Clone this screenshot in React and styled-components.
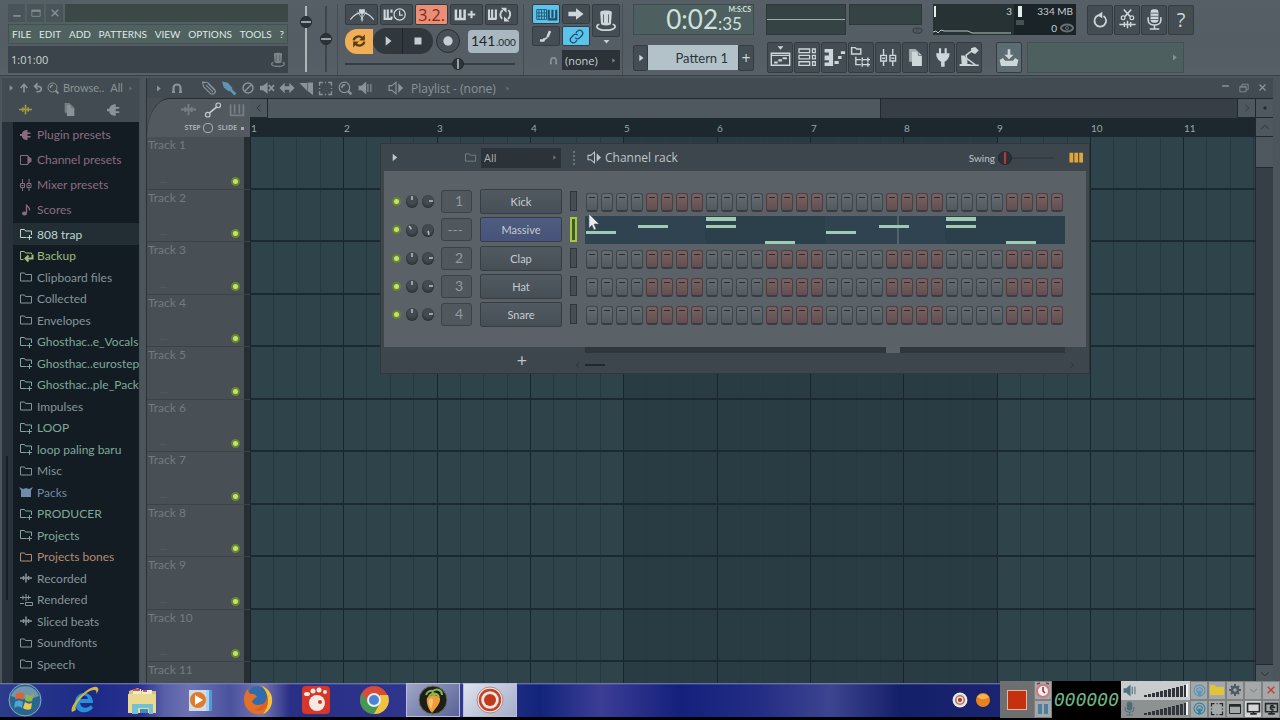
import React, { useState } from 'react'
import styled, { createGlobalStyle, css } from 'styled-components';

const narrow = 'Lato, "Open Sans", sans-serif';

const ICONS = {
  play: <path d="M8 4l10 8-10 8z" fill="currentColor" stroke="none" />,
  stop: <path d="M5 5h14v14H5z" fill="currentColor" stroke="none" />,
  dot: <circle cx="12" cy="12" r="7" fill="currentColor" stroke="none" />,
  down: <path d="M4 8h16l-8 9z" fill="currentColor" stroke="none" />,
  loop: <><path d="M3 11c1-7 10-9 15-4M21 13c-1 7-10 9-15 4" strokeWidth="4" /><path d="M22 1v10H12zM2 23V13h10z" fill="currentColor" stroke="none" /></>,
  metronome: <><path d="M-8 20C-2 12 5 8 12 8s14 4 20 12M12 6v17" strokeWidth="2" /><path d="M4 6L14 20M20 6L10 20" strokeWidth="1.4" /><path d="M7 2h10v5l-5 4-5-4z" fill="currentColor" stroke="none" /></>,
  waitKeys: <><path d="M-7 4v15H5M-2 4v14M4 4v5M4 15v4" strokeWidth="3.4" /><circle cx="17" cy="12" r="9" /><path d="M17 6v7h5" /></>,
  keysPlus: <><path d="M-5 4v15h14V4M2 4v14" strokeWidth="4" /><path d="M20 6v12M14 12h12" strokeWidth="3.4" /></>,
  keysLoop: <><path d="M-8 4v15H4M-3 4v14M3 4v15" strokeWidth="3.4" /><path d="M13 19a9 9 0 0 1 1-14M23 5a9 9 0 0 1-1 14" strokeWidth="3" /><path d="M11 1h9v8zM25 23h-9v-8z" fill="currentColor" stroke="none" /></>,
  grid: <><path d="M-6 3h18v18H-6zM-2 3v18M3 3v18M8 3v18M-6 9h18M-6 15h18" strokeWidth="1.6" /><path d="M16 3v18h14V3M23 3v15" strokeWidth="4" /></>,
  arrow: <path d="M-1 8h13V2l13 10-13 10v-6H-1z" fill="currentColor" stroke="none" />,
  glide: <><path d="M0 21h7l2-4M15 14l5-12" strokeWidth="5" /><path d="M9 18l6-3" strokeWidth="3" /></>,
  link: <path d="M10 14a5 5 0 0 0 7 0l4-4a5 5 0 0 0-7-7l-3 3M14 10a5 5 0 0 0-7 0l-4 4a5 5 0 0 0 7 7l3-3" />,
  hat: <><path d="M5 1c3-2 11-2 14 0l-1 15c-4 2-8 2-12 0z" fill="currentColor" stroke="none" /><path d="M4 16c-6 2-3 7 8 7s14-5 8-7" /><path d="M9 4v10M15 4v10" stroke="#4b555c" strokeWidth="1" /></>,
  magnet: <path d="M5 22v-10a7 7 0 0 1 14 0v10M2 20h6M16 20h6" strokeWidth="4.4" />,
  playlist: <><path d="M8 -4h8l-4 5z" fill="currentColor" stroke="none" /><path d="M-1 6h26v17H-1zM-1 9h26" /><path d="M3 19h5M9 16h5M15 13h6" strokeWidth="3" /></>,
  rack: <path d="M0 0h15v5H0zM0 9h15v5H0zM0 18h15v5H0zM19 0h4v5h-4zM19 9h4v5h-4zM19 18h4v5h-4z" strokeWidth="1.8" />,
  piano: <><path d="M-2 0h12v24H-2v-5h6v-3H-2v-7h6V5H-2z" fill="currentColor" stroke="none" /><path d="M12 19h6M17 12h5M21 5h6" strokeWidth="4" /></>,
  browser: <path d="M-2-2h5l2 2h6v7H-2zM4 11v11h7M4 15h7M13 12v6M13 19v6M13 15h11M13 22h11M21 12v6M21 19v6" strokeWidth="2" />,
  mixer: <path d="M5 0v9M5 17v7M18 0v9M18 17v7M1 9h8v8H1zM14 9h8v8h-8zM3 13h4M16 13h4" />,
  pages: <><path d="M3 0h9l4 4v14H3z" fill="currentColor" stroke="none" opacity=".7" /><path d="M7 4h9l5 5v15H7z" fill="currentColor" stroke="none" /><path d="M16 4v5h5" stroke="#4b555c" strokeWidth="1" /></>,
  plug: <path d="M7-1h3v7h5v-7h3v7h4c0 6-3 10-7 12v7h-5v-7C6 16 3 12 3 6h4z" fill="currentColor" stroke="none" />,
  lamp: <><path d="M16 2l-9 7 2 6" strokeWidth="2" /><path d="M14-1l6-2 5 5-5 5-5-2z" fill="currentColor" stroke="none" /><path d="M0 9h5l4 6v6h4v3H-2v-3h3z" fill="currentColor" stroke="none" /><path d="M9 14l12 9M12 23h13" /></>,
  save: <><path d="M10-1h4v8h5l-7 7-7-7h5z" fill="currentColor" stroke="none" /><path d="M-2 15l5-3 3 4h12l3-4 5 3-2 9H0z" fill="currentColor" stroke="none" /></>,
  undo: <><path d="M18 5a10 10 0 1 1-9-1" strokeWidth="3" /><path d="M16-2v11L7 4z" fill="currentColor" stroke="none" /></>,
  cut: <><path d="M6-4l10 11M18-4L8 7M-1 20h26M7 16v8M12 14v12M17 16v8" strokeWidth="2.4" /><circle cx="5" cy="9" r="3" /><circle cx="19" cy="9" r="3" /></>,
  mic: <><rect x="7" y="-1" width="10" height="17" rx="4" fill="currentColor" stroke="none" /><path d="M4 9v4c0 8 16 8 16 0V9M12 19v5M6 24h12" /><path d="M7 4h10M7 8h10M7 12h10" stroke="#4b555c" strokeWidth="1" /></>,
  up: <path d="M12 23V5M4 12l8-9 8 9" strokeWidth="4" />,
  back: <path d="M8 21c15 1 16-13 3-13H5M11 1L4 8l7 7" strokeWidth="4" />,
  search: <><circle cx="11" cy="11" r="9" /><path d="M7 12a4 4 0 0 1 5-5" strokeWidth="3" /><path d="M17 17l6 6" strokeWidth="4" /></>,
  wave: <path d="M0 12h24M7 8v8M12 3v18M17 8v8" strokeWidth="3" />,
  speaker: <><path d="M1 8h5l8-7v22l-8-7H1z" fill="currentColor" stroke="none" /><path d="M17 5v14M22 5v14" /></>,
  plugin: <path d="M0 10h4c0-5 5-8 11-8v5h6v3h-6v4h6v3h-6v5C9 22 4 19 4 14H0z" fill="currentColor" stroke="none" />,
  channel: <><path d="M1 3h15v18H1z" /><path d="M16 4l7 5v6l-7 5z" fill="currentColor" stroke="none" /></>,
  note: <><path d="M13 18V1c1 6 8 5 6 12" strokeWidth="2.6" /><ellipse cx="9" cy="19" rx="5" ry="4" fill="currentColor" stroke="none" /></>,
  folder: <path d="M1 20V4h8l2 3h12v13z" />,
  folderPlus: <path d="M13 19H1V3h8l2 3h12v8M19 14v10M14 19h10" />,
  folderBack: <><path d="M7 19H1V3h8l2 3h12v2" /><path d="M25 9v8H13M17 11l-6 6 6 6" strokeWidth="4" /></>,
  packs: <path d="M-2 2l8 4 6-2 6 2 8-4-4 7v13H2V9z" fill="currentColor" stroke="none" />,
  rendered: <path d="M0 7h22M6 3v8M12 0v14M17 3v8M0 19h8M11 17h14v6H11z" />,
  brush: <><path d="M0 1l10 2 8 9-6 6-9-7z" fill="currentColor" stroke="none" /><path d="M14 14l9 9" strokeWidth="5" /></>,
  pencil: <path d="M1 2l9 1 12 12c3 4-2 9-7 7L3 10zM7 7l12 12M11 5l11 11" />,
  ban: <><circle cx="12" cy="12" r="10" strokeWidth="3" /><path d="M5 19L19 5" strokeWidth="3" /></>,
  mute: <><path d="M0 8h5l8-6v20l-8-6H0z" fill="currentColor" stroke="none" /><path d="M15 7l9 10M24 7l-9 10" strokeWidth="3" /></>,
  slip: <path d="M-1 12l9-9v6h8V3l9 9-9 9v-6H8v6z" fill="currentColor" stroke="none" />,
  slice: <><path d="M-1 2h14v14z" fill="currentColor" stroke="none" /><path d="M15 2h8v20l-8-6z" fill="currentColor" /></>,
  select: <path d="M1 7V1h6M17 1h6v6M23 17v6h-6M7 23H1v-6M1 11v2M23 11v2M11 1h2M11 23h2" strokeWidth="2.5" />,
  monitor: <><path d="M0 8h5l7-6v20l-7-6H0z" /><path d="M16 4l8 8-8 8z" fill="currentColor" stroke="none" /></>,
  slide: <><circle cx="3" cy="20" r="4" /><circle cx="21" cy="4" r="4" /><path d="M6 17L18 7" strokeWidth="3" /></>,
  keys: <path d="M1 2v19h22V2M8 2v16M16 2v16" strokeWidth="3" />,
  steps: <path d="M-1 3h7v18h-7zM8 3h7v18H8zM17 3h7v18h-7z" fill="currentColor" stroke="none" />,
  left: <path d="M16 4l-9 8 9 8" />,
  right: <path d="M8 4l8 8-8 8" />,
  chevUp: <path d="M3 16l9-8 9 8" />,
  chevDown: <path d="M3 8l9 8 9-8" />,
  min: <path d="M3 8h18" strokeWidth="4" />,
  minLow: <path d="M3 19h18" strokeWidth="4" />,
  max: <><path d="M2 5h20v15H2z" /><path d="M2 7h20" strokeWidth="4" /></>,
  restore: <path d="M2 8h15v13H2zM7 8V3h15v13h-5M2 10h15" />,
  close: <path d="M4 4l16 16M20 4L4 20" strokeWidth="3.5" />,
  gear: <><circle cx="12" cy="12" r="6" strokeWidth="5" /><path d="M12 0v5M12 19v5M0 12h5M19 12h5M4 4l3 3M17 17l3 3M20 4l-3 3M4 20l3-3" strokeWidth="4" /></>,
  screen: <path d="M1 3h22v15H1zM12 18v4M6 22h12" strokeWidth="3" />,
  game: <><path d="M1 3h22v15H1zM12 18v4M6 22h12" strokeWidth="3" /><path d="M16 7a4 4 0 1 0 0 7M12 10h7" strokeWidth="3" /></>,
  windowed: <><path d="M1 3h22v18H1z" /><path d="M1 5h22" strokeWidth="5" /></>,
  radio: <><circle cx="12" cy="12" r="10" /><circle cx="12" cy="12" r="5" /><path d="M12 12v11" strokeWidth="5" /></>,
  eye: <><ellipse cx="12" cy="12" rx="12" ry="7" strokeWidth="4" /><circle cx="12" cy="12" r="3" /></>,
};

const Icon = ({ name, size = 14 }) => (
  <Svg width={size} height={size} viewBox="0 0 24 24" aria-hidden="true">{ICONS[name]}</Svg>
)

const BROWSER_TOP = [
  ['plugin', 'Plugin presets'], ['channel', 'Channel presets'], ['mixer', 'Mixer presets'], ['note', 'Scores'],
];

const FOLDERS = [
  { icon: 'folderPlus', name: '808 trap', color: '#b9d6d0', active: true },
  { icon: 'folderBack', name: 'Backup', color: '#9fb980' },
  { icon: 'folder', name: 'Clipboard files' },
  { icon: 'folder', name: 'Collected' },
  { icon: 'folder', name: 'Envelopes' },
  { icon: 'folderPlus', name: 'Ghosthac..e_Vocals', color: '#7fa89a' },
  { icon: 'folderPlus', name: 'Ghosthac..eurostep', color: '#7fa89a' },
  { icon: 'folderPlus', name: 'Ghosthac..ple_Pack', color: '#7fa89a' },
  { icon: 'folder', name: 'Impulses' },
  { icon: 'folderPlus', name: 'LOOP', color: '#7fa89a' },
  { icon: 'folderPlus', name: 'loop paling baru', color: '#7fa89a' },
  { icon: 'folder', name: 'Misc' },
  { icon: 'packs', name: 'Packs', color: '#6f8bab' },
  { icon: 'folderPlus', name: 'PRODUCER', color: '#7fa89a' },
  { icon: 'folderPlus', name: 'Projects', color: '#7fa89a' },
  { icon: 'folder', name: 'Projects bones', color: '#b38a70' },
  { icon: 'wave', name: 'Recorded' },
  { icon: 'rendered', name: 'Rendered' },
  { icon: 'wave', name: 'Sliced beats' },
  { icon: 'folder', name: 'Soundfonts' },
  { icon: 'folder', name: 'Speech' },
];

const CHANNELS = [
  { name: 'Kick', track: '1' },
  { name: 'Massive', track: '---', notes: true },
  { name: 'Clap', track: '2' },
  { name: 'Hat', track: '3' },
  { name: 'Snare', track: '4' },
];

// x, y, height inside the 480 x 28 mini piano roll
const NOTES = [
  [1, 15, 3], [53, 9, 3], [121, 1, 4], [121, 9, 3], [180, 25, 3],
  [241, 15, 3], [294, 9, 3], [361, 1, 4], [361, 9, 3], [421, 25, 3],
];

const BARS = Array.from({ length: 11 }, (_, i) => i + 1);
const STEPS = Array.from({ length: 32 }, (_, i) => i);

const TopBar = () => (
  <Toolbar>
    <MainPanel>
      <WindowRow>
        <WinButton aria-label="Minimize"><Icon name="minLow" size={10} /></WinButton>
        <WinButton aria-label="Maximize"><Icon name="max" size={10} /></WinButton>
        <WinButton aria-label="Close"><Icon name="close" size={10} /></WinButton>
        <WinTitle />
      </WindowRow>
      <Menu>
        {['FILE', 'EDIT', 'ADD', 'PATTERNS', 'VIEW', 'OPTIONS', 'TOOLS', '?'].map(m => (
          <MenuButton key={m}>{m}</MenuButton>
        ))}
      </Menu>
      <HintBar><span>1:01:00</span><Dim><Icon name="hat" /></Dim></HintBar>
    </MainPanel>
    <Faders>
      <Fader type="range" aria-label="Master volume" defaultValue="82" $track="#aeb6ba" />
      <Fader type="range" aria-label="Master pitch" defaultValue="50" $track="#3c454b" />
    </Faders>

    <Transport>
      <Row $gap={2}>
        <Tool $w={33} $h={21} aria-label="Metronome"><Icon name="metronome" size={14} /></Tool>
        <Tool $w={33} $h={21} aria-label="Wait for input"><Icon name="waitKeys" size={15} /></Tool>
        <Tool $w={33} $h={21} $tone="red">3.2.</Tool>
        <Tool $w={33} $h={21} aria-label="Step edit"><Icon name="keysPlus" size={15} /></Tool>
        <Tool $w={33} $h={21} aria-label="Loop record"><Icon name="keysLoop" size={15} /></Tool>
      </Row>
      <Row>
        <SongMode aria-label="Song mode"><Icon name="loop" size={14} /></SongMode>
        <PlayButton aria-label="Play"><Icon name="play" size={14} /></PlayButton>
        <StopButton aria-label="Stop"><Icon name="stop" size={12} /></StopButton>
        <RecButton aria-label="Record"><Icon name="dot" size={16} /></RecButton>
        <Tempo><TempoInput aria-label="Tempo" defaultValue="141" /><small>.000</small></Tempo>
      </Row>
      <Slider type="range" aria-label="Song position" defaultValue="68" />
    </Transport>

    <Snap>
      <SnapGrid>
        <Tool $w={28} $h={20} $tone="blue" aria-label="Typing keyboard"><Icon name="grid" size={13} /></Tool>
        <Tool $w={28} $h={20} aria-label="Auto scroll"><Icon name="arrow" size={14} /></Tool>
        <HatCell>
          <Tool $w={28} $h={33} aria-label="Hints"><Icon name="hat" size={20} /></Tool>
          <Icon name="down" size={9} />
        </HatCell>
        <Tool $w={28} $h={20} aria-label="Glide"><Icon name="glide" size={12} /></Tool>
        <Tool $w={28} $h={20} $tone="blue" aria-label="Link"><Icon name="link" size={15} /></Tool>
      </SnapGrid>
      <SnapRow>
        <Dim><Icon name="magnet" size={9} /></Dim>
        <SelectBox><DarkSelect aria-label="Snap"><option>(none)</option></DarkSelect><Icon name="play" size={7} /></SelectBox>
      </SnapRow>
    </Snap>

    <Stack>
      <Strip>
        <TimePanel>
          <TimeBig>0:02</TimeBig><TimeSide><sup>M:S:CS</sup><span>:35</span></TimeSide>
        </TimePanel>
        <Scope><ScopeLine /></Scope>
        <Spectrum><Meter /><Icon name="eye" size={9} /></Spectrum>
        <Cpu>
          <CpuGraph><span>3</span>
            <svg width="78" height="8" viewBox="0 0 78 8" aria-hidden="true"><path d="M0 5l3-1 2 2 3-3 3 1h24l4 2h40" fill="none" stroke="#b5c5c2" /></svg>
          </CpuGraph>
          <CpuInfo><span>334 MB</span><CpuLine>0<Dim><Icon name="eye" size={12} /></Dim></CpuLine></CpuInfo>
        </Cpu>
        <Row $gap={1}>
          <Tool $w={26} $h={30} aria-label="Undo"><Icon name="undo" size={14} /></Tool>
          <Tool $w={26} $h={30} aria-label="Edison"><Icon name="cut" size={15} /></Tool>
          <Tool $w={26} $h={30} aria-label="Record audio"><Icon name="mic" size={19} /></Tool>
          <Tool $w={26} $h={30} $big>?</Tool>
        </Row>
      </Strip>
      <Strip>
        <PatternPanel>
          <Tool $w={15} $h={26} aria-label="Previous pattern"><Icon name="play" size={10} /></Tool>
          <PatternSelect aria-label="Pattern"><option>Pattern 1</option></PatternSelect>
          <Tool $w={16} $h={26}>+</Tool>
        </PatternPanel>
        <Row $gap={1}>
          {['playlist', 'rack', 'piano', 'browser', 'mixer', 'pages', 'plug', 'lamp'].map(n => (
            <Tool key={n} $w={26} $h={31} aria-label={n}><Icon name={n} size={17} /></Tool>
          ))}
        </Row>
        <News>
          <Tool $w={26} $h={31} $tone="soft" aria-label="Downloads"><Icon name="save" size={16} /></Tool>
          <NewsPanel><Icon name="play" size={9} /></NewsPanel>
        </News>
      </Strip>
    </Stack>
  </Toolbar>
)

const Browser = () => (
  <Side>
    <SideHead>
      <Row $gap={4}>
        <Icon name="play" size={8} /><Icon name="up" size={10} /><Icon name="back" size={10} /><Icon name="search" size={12} />
        <span>Browse..</span><SideAll>All</SideAll><Dim><Icon name="play" size={7} /></Dim>
      </Row>
      <SideTabs>
        <IconButton aria-label="All" $color="#a39a3e"><Icon name="wave" size={13} /></IconButton>
        <IconButton aria-label="Files"><Icon name="pages" size={13} /></IconButton>
        <IconButton aria-label="Plugins"><Icon name="plugin" /></IconButton>
      </SideTabs>
    </SideHead>
    <SideBody>
      <SideScroll><SideThumb /></SideScroll>
      <Lists>
        <PresetList>
          {BROWSER_TOP.map(([icon, name]) => <Preset key={name}><Icon name={icon} size={12} />{name}</Preset>)}
        </PresetList>
        <FolderList>
          {FOLDERS.map(f => (
            <Folder key={f.name} $color={f.color} $active={f.active}><Icon name={f.icon} size={12} />{f.name}</Folder>
          ))}
        </FolderList>
      </Lists>
    </SideBody>
  </Side>
)

const Knob = ({ angle, label }) => (
  <KnobLabel>
    <svg width="14" height="16" viewBox="0 0 14 16" aria-hidden="true">
      <circle cx="7" cy="9" r="6" fill="#2b3136" />
      <circle cx="7" cy="8" r="6" fill="#373f45" />
      <circle cx="7" cy="7" r="5" fill="#434b51" />
      <path d="M7 3v4" stroke="#b4bcc0" strokeWidth="1.6" transform={`rotate(${angle} 7 8)`} />
    </svg>
    <input type="range" aria-label={label} />
  </KnobLabel>
)

const ChannelRow = ({ channel }) => {
  const [on, setOn] = useState({});

  return (
    <ChannelLine $tall={channel.notes}>
      <Led type="checkbox" defaultChecked aria-label={`${channel.name} on`} />
      <Knob angle={channel.notes ? -35 : 0} label={`${channel.name} pan`} />
      <Knob angle={channel.notes ? 170 : 90} label={`${channel.name} volume`} />
      <TrackNo>{channel.track}</TrackNo>
      <ChannelButton $selected={channel.notes}>{channel.name}</ChannelButton>
      <Selector $selected={channel.notes} aria-label={`Select ${channel.name}`} />
      {channel.notes
        ? <Roll viewBox="0 0 480 28" width="480" height="28">
            <path d="M0 0h480v28H0z" fill="#2f4450" />
            <path d="M120 0h120v28H120zM360 0h120v28H360z" fill="#2c404b" />
            <path d="M313 0v28" stroke="#6c8580" />
            {NOTES.map(([x, y, h]) => <rect key={`${x}-${y}`} x={x} y={y} width="30" height={h} fill="#9ecbb2" />)}
          </Roll>
        : <StepRow>
            {STEPS.map(i => (
              <Step key={i} $red={Math.floor(i / 4) % 2 === 1} aria-label={`Step ${i + 1}`} aria-pressed={!!on[i]}
                onClick={() => setOn({ ...on, [i]: !on[i] })} />
            ))}
          </StepRow>}
    </ChannelLine>
  )
}

const ChannelRack = () => (
  <Rack>
    <RackTitle>
      <Icon name="play" size={11} />
      <Filter>
        <Dim><Icon name="folder" size={11} /></Dim>
        <SelectBox $wide><DarkSelect aria-label="Channel filter"><option>All</option></DarkSelect><Icon name="play" size={7} /></SelectBox>
      </Filter>
      <Grip />
      <Icon name="monitor" size={13} />
      <RackName>Channel rack</RackName>
      <SwingLabel>Swing <Swing type="range" defaultValue="0" /></SwingLabel>
      <IconButton $color="#e0a63a" aria-label="Step graph"><Icon name="steps" size={13} /></IconButton>
    </RackTitle>
    <RackBody>
      {CHANNELS.map(c => <ChannelRow key={c.name} channel={c} />)}
    </RackBody>
    <RackFoot>
      <AddChannel aria-label="Add channel">+</AddChannel>
      <FootBars>
        <FootTrack><FootThumb /></FootTrack>
        <FootScroll><Icon name="left" size={8} /><FootHandle /><Icon name="right" size={8} /></FootScroll>
      </FootBars>
    </RackFoot>
    <Pointer width="12" height="18" viewBox="0 0 12 18" aria-hidden="true">
      <path d="M1 1v14l3-3 2 5 2-1-2-5h5z" fill="#e8eef0" stroke="#555e66" strokeWidth=".6" />
    </Pointer>
  </Rack>
)

const Playlist = () => (
  <Window>
    <PlayTitle>
      <Icon name="play" size={9} />
      <Icon name="magnet" size={12} />
      <ToolSet>
        <Icon name="pencil" /><BlueIcon><Icon name="brush" /></BlueIcon><Icon name="ban" size={12} /><Icon name="mute" /><Icon name="slip" />
        <Icon name="slice" size={13} /><Icon name="select" size={13} /><Icon name="search" /><Icon name="speaker" />
      </ToolSet>
      <Icon name="monitor" />
      <PlayName>Playlist - (none)</PlayName>
      <Dim><Icon name="play" size={7} /></Dim>
      <WinSet><Icon name="min" size={9} /><Icon name="restore" size={10} /><Icon name="close" size={9} /></WinSet>
    </PlayTitle>
    <PlayBody>
      <TrackColumn>
        <TrackHead>
          <Row $gap={10}><Dim><Icon name="wave" size={15} /></Dim><BrightIcon><Icon name="slide" /></BrightIcon><Dim><Icon name="keys" /></Dim></Row>
          <StepSlide>STEP<i />SLIDE<b /></StepSlide>
        </TrackHead>
        {BARS.map(n => (
          <Track key={n}>
            <TrackName><span>Track {n}</span><TrackDots>...</TrackDots></TrackName>
            <Led type="checkbox" defaultChecked aria-label={`Track ${n} on`} />
          </Track>
        ))}
      </TrackColumn>
      <Arrange>
        <HScroll>
          <ScrollButton aria-label="Scroll left"><Icon name="left" size={10} /></ScrollButton>
          <HThumb />
          <HRest />
          <ScrollButton aria-label="Scroll right"><Icon name="right" size={10} /></ScrollButton>
        </HScroll>
        <Ruler>{BARS.map(n => <Bar key={n}>{n}</Bar>)}</Ruler>
        <Lanes>{BARS.map(n => <Lane key={n} />)}</Lanes>
      </Arrange>
      <VScroll>
        <ScrollButton aria-label="Zoom"><Icon name="dot" size={6} /></ScrollButton>
        <ScrollButton aria-label="Scroll up"><Icon name="chevUp" size={10} /></ScrollButton>
        <VThumb />
        <VRest />
        <ScrollButton aria-label="Scroll down"><Icon name="chevDown" size={10} /></ScrollButton>
      </VScroll>
    </PlayBody>
    <ChannelRack />
  </Window>
)

const APPS = {
  explorer: <><path d="M2 6l9-3 3 3h15v22H2z" fill="#d8c57c" /><path d="M6 4h8v6H6zM15 5h10v6H15z" fill="#f2ecd6" /><path d="M6 5h7M16 6h4" stroke="#cb5644" strokeWidth="2" /><path d="M1 9h28v19H1z" fill="#ead98e" /><path d="M5 19h21v10h-4v-6H11v6H5z" fill="#6fc1d8" /><path d="M13 24h8v4h-8z" fill="#3f8dbd" /></>,
  ie: <><path d="M24 18H11c1 6 8 6 11 2l2 3c-7 8-19 4-18-6C7 5 24 5 24 18zM11 14h8c-1-5-7-4-8 0z" fill="#2a8fdb" /><path d="M3 27C-1 20 24-4 29 3c1 2 0 4-2 6 1-3 0-4-2-4C17 5 4 21 7 25z" fill="#d4b83e" /></>,
  player: <><path d="M12 5h15v21H12z" fill="#4f9bd8" /><path d="M9 5h15v21H9z" fill="#a9d3ee" /><path d="M4 5h17v21H4z" fill="#d3dde4" /><circle cx="13" cy="15" r="8" fill="#e07a2c" /><path d="M10 10l8 5-8 5z" fill="#fff" /></>,
  firefox: <><circle cx="15" cy="15" r="14" fill="#dd6022" /><circle cx="14" cy="11" r="10" fill="#2f6cae" /><path d="M1 14c0-5 2-8 4-10 0 3 1 4 3 5 3-1 5 1 6 3-3 1-3 3-5 4 1 4 6 5 10 3-1 3-5 6-9 5 4 3 11 2 14-3 2-4 3-8 1-14 6 7 4 16-1 19-9 7-22 2-23-12z" fill="#e2702a" /><path d="M19 1c7 3 11 9 10 16-1 6-4 10-9 12 7-8 7-19-1-28z" fill="#f0c53d" /></>,
  gom: <><rect x="1" y="1" width="28" height="28" rx="4" fill="#d9362b" /><circle cx="16" cy="18" r="8" fill="#f4e9e3" /><circle cx="19" cy="17" r="2" fill="#d9362b" /><ellipse cx="6" cy="9" rx="3" ry="2" fill="#f4e9e3" /><circle cx="12" cy="6" r="2.5" fill="#f4e9e3" /><circle cx="18" cy="5" r="2.5" fill="#f4e9e3" /><circle cx="24" cy="7" r="2" fill="#f4e9e3" /></>,
  chrome: <><circle cx="15" cy="15" r="14" fill="#d84a3a" /><path d="M3 8a14 14 0 0 0 12 21l6-11-6 3-6-3z" fill="#3f9b52" /><path d="M29 10a14 14 0 0 1-14 19l6-11V10z" fill="#efc33d" /><circle cx="15" cy="15" r="7" fill="#eee" /><circle cx="15" cy="15" r="5" fill="#4a84d8" /></>,
  fl: <><circle cx="15" cy="15" r="14" fill="#1b1e1a" stroke="#6a7058" /><path d="M9 13c3-4 10-4 13 0 1 5-5 11-8 15-4-4-6-11-5-15z" fill="#f09c38" /><path d="M11 15c1-2 4-2 4 0 0 4-1 7-2 9-1-2-3-6-2-9z" fill="#f8c673" /><path d="M8 10c1-3 4-5 7-4 4-3 9-1 9 4M11 12c1-4 8-5 10 0M15 6c-1 2 0 4 2 5" fill="none" stroke="#8db549" strokeWidth="2" /></>,
  cam: <><circle cx="15" cy="15" r="13" fill="#f1e7e1" stroke="#a98c86" /><circle cx="15" cy="15" r="10" fill="none" stroke="#c44127" strokeWidth="2.5" /><circle cx="15" cy="15" r="6" fill="#c23a1e" /></>,
  target: <><circle cx="15" cy="15" r="14" fill="#f1e7e1" /><circle cx="15" cy="15" r="8" fill="none" stroke="#9a7a72" strokeWidth="3" /><circle cx="15" cy="15" r="4" fill="#c23a1e" /></>,
};

const AppIcon = ({ name, size = 30 }) => <svg width={size} height={size} viewBox="0 0 30 30" aria-hidden="true">{APPS[name]}</svg>

const Levels = () => (
  <svg width="44" height="13" viewBox="0 0 44 13" aria-hidden="true">
    {Array.from({ length: 11 }, (_, i) => <rect key={i} x={i * 4} y={11 - i} width="3" height={2 + i} fill="#32363a" />)}
    <path d="M43 0v13" stroke="#f4f4f4" strokeWidth="2" />
  </svg>
)

const Taskbar = () => (
  <Tasks>
    <Start aria-label="Start">
      <svg width="34" height="34" viewBox="0 0 34 34" aria-hidden="true">
        <circle cx="17" cy="17" r="16" fill="#28668f" stroke="#8ba9bd" />
        <path d="M3 13c4-13 24-13 28 0-9 4-19 4-28 0z" fill="#91abb9" opacity=".7" />
        <path d="M8 11c3-2 5-2 8 0l-1 6c-3-2-5-2-8 0z" fill="#dd6236" />
        <path d="M18 11c3 2 5 2 8 0l-2 7c-3 1-4 1-7-1z" fill="#8db846" />
        <path d="M7 19c3-2 5-2 8 0l-1 6c-3-2-5-2-8 0z" fill="#4ba6d6" />
        <path d="M17 19c3 2 4 2 7 1l-1 6c-3 1-5 1-8-1z" fill="#efc94b" />
      </svg>
    </Start>
    {['ie', 'explorer', 'player', 'firefox', 'gom', 'chrome'].map(n => <Pinned key={n} aria-label={n}><AppIcon name={n} /></Pinned>)}
    <Running aria-label="FL Studio"><AppIcon name="fl" /></Running>
    <Running aria-label="Recorder" $bright><AppIcon name="cam" /></Running>
    <Tray>
      <AppIcon name="target" size={16} />
      <svg width="16" height="16" viewBox="0 0 16 16" aria-hidden="true"><circle cx="8" cy="8" r="7" fill="#e8821e" /><path d="M2 5c3-4 9-4 12 0-4 3-8 3-12 0z" fill="#f6b552" /></svg>
    </Tray>
    <Recorder>
      <StopBlock aria-label="Stop recording"><i /></StopBlock>
      <RecCol>
        <RecCell $color="#c05a5a" aria-label="Schedule">
          <svg width="16" height="16" viewBox="0 0 16 16" aria-hidden="true"><circle cx="8" cy="9" r="6" fill="#eee" stroke="#c77b7b" strokeWidth="2" /><path d="M8 5v4l2 2M2 2l3-1M14 2l-3-1" fill="none" stroke="#933" strokeWidth="1.6" /></svg>
        </RecCell>
        <RecCell $color="#4c7f9f" aria-label="Pause"><svg width="12" height="12" viewBox="0 0 12 12" aria-hidden="true"><path d="M1 1h4v10H1zM7 1h4v10H7z" fill="currentColor" /></svg></RecCell>
      </RecCol>
      <Clock>000000</Clock>
      <RecCol>
        <LevelRow $lit><Icon name="speaker" size={13} /><Levels /></LevelRow>
        <LevelRow><Icon name="mic" size={13} /><Levels /></LevelRow>
      </RecCol>
      <RecGrid>
        <RecCell $color="#5795bb" aria-label="Stream"><Icon name="radio" size={13} /></RecCell>
        <RecCell $color="#e2c437" aria-label="Open folder"><svg width="14" height="12" viewBox="0 0 14 12" aria-hidden="true"><path d="M0 11V1h5l1 2h8v8z" fill="currentColor" /></svg></RecCell>
        <RecCell $color="#4d5a63" aria-label="Settings"><Icon name="gear" size={12} /></RecCell>
        <RecCell $color="#5c7080" aria-label="Collapse"><Icon name="chevDown" size={9} /></RecCell>
        <RecCell $color="#c0442f" aria-label="Close recorder"><Icon name="close" size={10} /></RecCell>
        <RecCell $color="#2f83a5" aria-label="Webcam"><Icon name="radio" size={13} /></RecCell>
        <RecCell aria-label="Region"><Icon name="select" size={12} /></RecCell>
        <RecCell aria-label="Window"><Icon name="windowed" size={12} /></RecCell>
        <RecCell $lit aria-label="Full screen"><Icon name="screen" size={13} /></RecCell>
        <RecCell aria-label="Game"><Icon name="game" size={13} /></RecCell>
      </RecGrid>
    </Recorder>
  </Tasks>
)

const App = () => (
  <Page>
    <GlobalStyle />
    <TopBar />
    <Main>
      <Browser />
      <Playlist />
    </Main>
    <Taskbar />
  </Page>
)

export default App;


const GlobalStyle = createGlobalStyle`
  * { box-sizing: border-box; }
  body { margin: 0; background: #000; font-family: "Open Sans", "Noto Sans", sans-serif; }
  button, input, select { font: inherit; color: inherit; margin: 0; padding: 0; border: 0; background: none; }
  ul { list-style: none; margin: 0; padding: 0; }
`;

const Page = styled.div`
  display: flex;
  flex-direction: column;
  height: 100vh;
  padding-bottom: 3px;
  background: #000;
  color: #9aa4a9;
  font-size: 12px;
`;

const Svg = styled.svg`
  flex: none;
  display: block;
  overflow: visible;
  fill: none;
  stroke: currentColor;
  stroke-width: 2;
`;

const Row = styled.div`
  display: flex;
  align-items: center;
  gap: ${p => p.$gap || 0}px;
`;

const Dim = styled.span`
  display: inline-flex;
  opacity: 0.45;
`;

const IconButton = styled.button`
  display: inline-flex;
  color: ${p => p.$color || '#8a9498'};
`;

/* top toolbar */

const Toolbar = styled.header`
  display: flex;
  flex: none;
  height: 76px;
  padding: 4px 0 0 8px;
  background: linear-gradient(#565f66, #555d64 60%, #586067);
  border-bottom: 1px solid #3a4248;
  color: #c5ced1;
`;

const MainPanel = styled.div`
  display: flex;
  flex-direction: column;
  gap: 2px;
  width: 280px;
`;

const WindowRow = styled.div`
  display: flex;
  gap: 2px;
  height: 18px;
`;

const WinButton = styled.button`
  width: 17px;
  display: flex;
  align-items: center;
  justify-content: center;
  background: #48545a;
  color: #87918f;
`;

const WinTitle = styled.div`
  flex: 1;
  background: #3b4845;
`;

const Menu = styled.nav`
  display: flex;
  align-items: center;
  justify-content: space-between;
  height: 20px;
  padding: 0 3px;
  background: #50625f;
  border: 1px solid #44524f;
`;

const MenuButton = styled.button`
  font-family: ${narrow};
  font-size: 10px;
  color: #dde8e5;
`;

const HintBar = styled.div`
  display: flex;
  align-items: center;
  justify-content: space-between;
  height: 27px;
  padding: 0 3px;
  background: #3b444a;
  color: #ccd4d6;
  font-size: 11px;
`;

const Faders = styled.div`
  display: flex;
  justify-content: space-between;
  width: 47px;
  padding: 2px 2px 2px 11px;
`;

const sliderThumb = css`
  appearance: none;
  width: 12px;
  height: 12px;
  border-radius: 6px;
  border: 1px solid #22282c;
  background: linear-gradient(90deg, #2d3439 40%, #9aa3a8 40%, #9aa3a8 60%, #2d3439 60%);
`;

const Fader = styled.input`
  appearance: none;
  writing-mode: vertical-lr;
  direction: rtl;
  width: 14px;
  height: 66px;
  background: linear-gradient(90deg, transparent 6px, ${p => p.$track} 6px, ${p => p.$track} 8px, transparent 8px);
  &::-webkit-slider-thumb {
    ${sliderThumb}
    background: linear-gradient(#2d3439 40%, #9aa3a8 40%, #9aa3a8 60%, #2d3439 60%);
  }
`;

const Transport = styled.section`
  display: flex;
  flex-direction: column;
  gap: 3px;
  width: 187px;
  padding: 0 0 0 7px;
  margin-left: 2px;
  border-left: 1px solid #444d53;
  border-right: 1px solid #444d53;
`;

const tones = {
  red: 'background: #ea8e76; color: #7a2c1d;',
  blue: 'background: #5cc4ea; color: #1d4f6b;',
  soft: 'background: #5c6c72;',
};

const Tool = styled.button`
  flex: none;
  display: flex;
  align-items: center;
  justify-content: center;
  width: ${p => p.$w}px;
  height: ${p => p.$h}px;
  border: 1px solid #343c42;
  border-radius: 2px;
  background: #444d53;
  color: #cdd6d9;
  font-size: ${p => (p.$big ? 20 : 16)}px;
  line-height: 16px;
  ${p => tones[p.$tone]}
`;

const SongMode = styled.button`
  display: flex;
  align-items: center;
  justify-content: center;
  width: 28px;
  height: 25px;
  border-radius: 12px 0 0 12px;
  background: #f0ae58;
  color: #5b3c14;
`;

const PlayButton = styled.button`
  display: flex;
  align-items: center;
  justify-content: center;
  width: 30px;
  height: 26px;
  border-radius: 13px 0 0 13px;
  background: #31383d;
  border-right: 1px solid #20262a;
`;

const StopButton = styled(PlayButton)`
  border-radius: 0 13px 13px 0;
  border-right: 0;
`;

const RecButton = styled(PlayButton)`
  width: 24px;
  height: 24px;
  margin-left: 3px;
  border-radius: 12px;
  border: 1px solid #282f33;
  background: #485056;
`;

const Tempo = styled.label`
  display: flex;
  align-items: baseline;
  width: 51px;
  height: 23px;
  margin-left: 8px;
  padding: 2px 0 0 3px;
  border-radius: 4px;
  background: #a9b8c0;
  color: #1f272b;
  font-family: ${narrow};
  small { font-size: 10px; }
`;

const TempoInput = styled.input`
  width: 25px;
  font-size: 14px;
`;

const Slider = styled.input`
  appearance: none;
  width: 170px;
  height: 14px;
  background: linear-gradient(transparent 6px, #353d43 6px, #353d43 8px, transparent 8px);
  &::-webkit-slider-thumb { ${sliderThumb} }
`;

const Snap = styled.section`
  display: flex;
  flex-direction: column;
  gap: 4px;
  width: 98px;
  padding: 0 0 0 8px;
`;

const SnapGrid = styled.div`
  display: grid;
  grid-template-columns: repeat(3, 28px);
  grid-template-rows: repeat(2, 20px);
  gap: 2px;
`;

const HatCell = styled.div`
  grid-row: 1 / span 2;
  grid-column: 3;
  display: flex;
  flex-direction: column;
  align-items: center;
`;

const SnapRow = styled.div`
  display: flex;
  align-items: center;
  justify-content: flex-end;
  gap: 4px;
  padding-right: 2px;
`;

const SelectBox = styled.div`
  display: flex;
  align-items: center;
  justify-content: space-between;
  width: ${p => (p.$wide ? 80 : 58)}px;
  height: 20px;
  padding: 0 3px;
  background: #2c3338;
  color: ${p => (p.$wide ? '#a8b1b6' : '#c5ced1')};
  svg { opacity: 0.5; }
`;

const DarkSelect = styled.select`
  appearance: none;
  flex: 1;
  min-width: 0;
  font-size: 11px;
`;

const Stack = styled.div`
  flex: 1;
  display: flex;
  flex-direction: column;
  gap: 7px;
  border-left: 1px solid #444d53;
  padding-left: 10px;
`;

const Strip = styled.div`
  display: flex;
  align-items: center;
`;

const TimePanel = styled.div`
  display: flex;
  align-items: center;
  justify-content: flex-end;
  width: 121px;
  height: 31px;
  margin-right: 12px;
  padding-right: 2px;
  background: #4e5f5f;
  border: 1px solid #3f4c4d;
  color: #cfe0dd;
  font-family: ${narrow};
`;

const TimeBig = styled.span`
  font-size: 26px;
  line-height: 29px;
`;

const TimeSide = styled.span`
  display: flex;
  flex-direction: column;
  width: 33px;
  font-size: 17px;
  line-height: 20px;
  sup { font: bold 7px/9px ${narrow}; text-align: right; }
`;

const Scope = styled.div`
  display: flex;
  align-items: center;
  width: 80px;
  height: 31px;
  margin-right: 3px;
  background: #364344;
  border: 1px solid #2e383b;
`;

const ScopeLine = styled.div`
  flex: 1;
  height: 1px;
  background: #9fb0ac;
`;

const Spectrum = styled.div`
  display: flex;
  flex-direction: column;
  align-items: flex-end;
  width: 73px;
  height: 31px;
  margin-right: 11px;
  gap: 1px;
  color: #3c464b;
`;

const Meter = styled.div`
  align-self: stretch;
  height: 21px;
  background: #364344;
  border: 1px solid #2e383b;
`;

const Cpu = styled.div`
  display: flex;
  width: 143px;
  height: 31px;
  margin-right: 11px;
  background: #263233;
  font-family: ${narrow};
  font-size: 10px;
  line-height: 14px;
`;

const CpuGraph = styled.div`
  display: flex;
  flex-direction: column;
  justify-content: space-between;
  width: 81px;
  background: linear-gradient(#e1eceb, #e1eceb) 1px 2px / 2px 11px no-repeat;
  span { text-align: right; padding-right: 2px; }
`;

const CpuInfo = styled.div`
  flex: 1;
  display: flex;
  flex-direction: column;
  align-items: flex-end;
  justify-content: space-between;
  padding-right: 3px;
  background: linear-gradient(#e1eceb, #e1eceb) 4px 2px / 4px 11px no-repeat, linear-gradient(#47514f, #47514f) 2px 16px / 8px 5px no-repeat, #1a2327;
`;

const CpuLine = styled.span`
  display: flex;
  align-items: center;
  gap: 4px;
`;

const PatternPanel = styled.div`
  display: flex;
  align-items: center;
  width: 121px;
  margin-right: 13px;
`;

const PatternSelect = styled.select`
  appearance: none;
  flex: 1;
  min-width: 0;
  height: 25px;
  padding-right: 10px;
  background: #b3c1c9;
  color: #2a363d;
  font-family: ${narrow};
  font-size: 13px;
  text-align: right;
  text-align-last: right;
`;

const News = styled.div`
  display: flex;
  gap: 5px;
  margin-left: 14px;
`;

const NewsPanel = styled.div`
  display: flex;
  align-items: center;
  justify-content: flex-end;
  width: 157px;
  height: 31px;
  padding-right: 4px;
  background: #4e5f5f;
  border: 1px solid #435052;
  color: #83918f;
`;

/* browser */

const Main = styled.main`
  flex: 1;
  min-height: 0;
  display: flex;
  gap: 5px;
  padding: 2px 7px 0 2px;
  background: #4c555c;
`;

const Side = styled.aside`
  display: flex;
  flex-direction: column;
  width: 139px;
  background: #3b444a;
  border-right: 2px solid #48525a;
`;

const SideHead = styled.div`
  height: 44px;
  padding: 2px 4px 0 5px;
  background: #414b51;
  color: #8a9498;
  font-family: ${narrow};
  font-size: 11px;
  span { line-height: 16px; }
`;

const SideAll = styled.span`
  margin-left: 2px;
`;

const SideTabs = styled.div`
  display: flex;
  justify-content: space-between;
  padding: 7px 14px 0 12px;
`;

const SideBody = styled.div`
  flex: 1;
  min-height: 0;
  display: flex;
`;

const SideScroll = styled.div`
  display: flex;
  align-items: center;
  justify-content: flex-end;
  width: 11px;
  padding: 250px 5px 0 0;
  background: #29323a;
`;

const SideThumb = styled.div`
  width: 2px;
  height: 144px;
  background: #171e25;
`;

const Lists = styled.div`
  flex: 1;
  overflow: hidden;
  background: #141c23;
`;

const PresetList = styled.ul`
  padding-bottom: 1px;
`;

const Preset = styled.li`
  display: flex;
  align-items: center;
  gap: 5px;
  height: 25px;
  padding-left: 7px;
  white-space: nowrap;
  color: #8a6c81;
  font-family: ${narrow};
  font-size: 12px;
`;

const FolderList = styled.ul``;

const Folder = styled(Preset)`
  height: 22px;
  color: ${p => p.$color || '#84949a'};
  background: ${p => (p.$active ? '#222d34' : 'none')};
  &:nth-child(even) { height: 21px; }
`;

/* playlist */

const Window = styled.section`
  position: relative;
  flex: 1;
  min-width: 0;
  display: flex;
  flex-direction: column;
  border-left: 1px solid #2b3338;
`;

const PlayTitle = styled.div`
  display: flex;
  align-items: center;
  gap: 8px;
  height: 20px;
  padding: 0 6px 0 7px;
  background: #434b52;
  color: #8a9398;
`;

const ToolSet = styled.div`
  display: flex;
  align-items: center;
  gap: 6px;
  margin: 0 9px 0 11px;
`;

const BlueIcon = styled.span`
  color: #5f95b0;
`;

const BrightIcon = styled.span`
  color: #c3cbce;
`;

const PlayName = styled.h1`
  margin: 0;
  font-size: 12px;
  font-weight: normal;
`;

const WinSet = styled.div`
  display: flex;
  gap: 9px;
  margin-left: auto;
`;

const PlayBody = styled.div`
  flex: 1;
  min-height: 0;
  display: flex;
  overflow: hidden;
  background: #20292f;
`;

const TrackColumn = styled.div`
  width: 103px;
  background: linear-gradient(90deg, #484f55 97px, #262e33 97px);
`;

const TrackHead = styled.div`
  display: flex;
  flex-direction: column;
  align-items: flex-end;
  gap: 5px;
  height: 39px;
  padding: 3px 6px 0 0;
  border-top: 1px solid #252d32;
  border-top-left-radius: 22px 38px;
  background: #525a60;
  color: #a3acb0;
`;

const StepSlide = styled.div`
  display: flex;
  align-items: center;
  gap: 2px;
  font-size: 7px;
  font-weight: bold;
  line-height: 12px;
  i { width: 10px; height: 10px; border: 1px solid #a3acb0; border-radius: 4px; margin-right: 3px; }
  b { width: 3px; height: 3px; margin: 0 0 0 2px; background: #a3acb0; }
`;

const Track = styled.div`
  display: flex;
  justify-content: space-between;
  align-items: flex-end;
  height: 53px;
  padding: 0 10px 3px 1px;
  border-bottom: 1px solid #3b4248;
  &:nth-child(odd) { height: 52px; }
`;

const TrackName = styled.div`
  align-self: stretch;
  display: flex;
  flex-direction: column;
  justify-content: space-between;
  color: #737b80;
  font-family: ${narrow};
  font-size: 12px;
  line-height: 16px;
`;

const TrackDots = styled.span`
  padding-left: 12px;
  font-size: 10px;
  line-height: 14px;
  opacity: 0.5;
`;

const Led = styled.input`
  appearance: none;
  flex: none;
  width: 9px;
  height: 9px;
  border-radius: 5px;
  border: 2px solid #6b8432;
  background: #c0e56a;
`;

const Arrange = styled.div`
  flex: 1;
  min-width: 0;
  display: flex;
  flex-direction: column;
`;

const HScroll = styled.div`
  display: flex;
  height: 20px;
  padding-top: 1px;
  gap: 1px;
`;

const ScrollButton = styled.button`
  flex: none;
  display: flex;
  align-items: center;
  justify-content: center;
  width: 17px;
  height: 18px;
  background: #50585f;
  color: #262e33;
`;

const HThumb = styled.div`
  flex: 62;
  background: #50585f;
`;

const HRest = styled.div`
  flex: 36;
  background: #373e45;
`;

const Ruler = styled.div`
  display: flex;
  height: 19px;
  padding-left: 1px;
  overflow: hidden;
  background: #1c282e;
  color: #98a6aa;
`;

const Bar = styled.div`
  flex: none;
  width: 93px;
  font-family: ${narrow};
  font-size: 10px;
  line-height: 20px;
  &:nth-child(3n) { width: 94px; }
`;

const Lanes = styled.div`
  flex: 1;
  min-height: 0;
  overflow: hidden;
  background: linear-gradient(90deg, transparent 374px, rgba(10, 22, 28, 0.16) 374px, rgba(10, 22, 28, 0.16) 747px, transparent 747px), #2f434b;
`;

// the first gradient draws bars, the second beats; three bars fill one 280px repeat
const Lane = styled.div`
  height: 52px;
  border-bottom: 2px solid #1b2a31;
  background:
    repeating-linear-gradient(90deg, #17252c 0, #17252c 1px, transparent 1px, transparent 93px, #17252c 93px, #17252c 94px, transparent 94px, transparent 187px, #17252c 187px, #17252c 188px, transparent 188px, transparent 280px),
    repeating-linear-gradient(90deg, transparent 0, transparent 23px, #263840 23px, #263840 24px, transparent 24px, transparent 46px, #263840 46px, #263840 47px, transparent 47px, transparent 70px, #263840 70px, #263840 71px, transparent 71px, transparent 93px,
      transparent 116px, #263840 116px, #263840 117px, transparent 117px, transparent 140px, #263840 140px, #263840 141px, transparent 141px, transparent 163px, #263840 163px, #263840 164px, transparent 164px, transparent 187px,
      transparent 210px, #263840 210px, #263840 211px, transparent 211px, transparent 233px, #263840 233px, #263840 234px, transparent 234px, transparent 257px, #263840 257px, #263840 258px, transparent 258px, transparent 280px);
  &:nth-child(odd) { height: 53px; }
`;

const VScroll = styled.div`
  display: flex;
  flex-direction: column;
  gap: 1px;
  padding: 1px 0 0 1px;
`;

const VThumb = styled.div`
  height: 30px;
  background: #50585f;
`;

const VRest = styled.div`
  flex: 1;
  background: #373e45;
`;

/* channel rack */

const Rack = styled.section`
  position: absolute;
  left: 233px;
  top: 65px;
  width: 710px;
  padding: 0 3px;
  background: #3e464d;
  border: 1px solid #30383e;
`;

const RackTitle = styled.div`
  display: flex;
  align-items: center;
  height: 27px;
  padding: 0 3px 0 5px;
  color: #bcc5c9;
`;

const Filter = styled.div`
  display: flex;
  align-items: center;
  gap: 5px;
  margin-left: 65px;
`;

const Grip = styled.div`
  width: 1px;
  height: 14px;
  margin: 0 13px 0 12px;
  border-left: 2px dotted #6b747a;
`;

const RackName = styled.h2`
  flex: 1;
  margin: 0 0 0 4px;
  font-size: 12px;
  font-weight: normal;
`;

const SwingLabel = styled.label`
  display: flex;
  align-items: center;
  gap: 3px;
  margin-right: 16px;
  font-family: ${narrow};
  font-size: 10px;
`;

const Swing = styled(Slider)`
  width: 56px;
  &::-webkit-slider-thumb {
    width: 14px;
    height: 14px;
    border-radius: 7px;
    background: linear-gradient(90deg, #2a3035 42%, #b33a38 42%, #b33a38 58%, #2a3035 58%);
  }
`;

const RackBody = styled.div`
  height: 176px;
  padding-top: 16px;
  background: #5a6167;
`;

const ChannelLine = styled.div`
  display: flex;
  align-items: center;
  height: ${p => (p.$tall ? 29 : 28)}px;
  padding-left: 8px;
`;

const KnobLabel = styled.label`
  position: relative;
  display: flex;
  margin-left: 2px;
  ${Led} + & { margin-left: 4px; }
  input { position: absolute; inset: 0; width: 100%; opacity: 0; }
`;

const TrackNo = styled.button`
  width: 31px;
  height: 23px;
  margin-left: 6px;
  padding-right: 8px;
  border: 1px solid #3b4349;
  border-radius: 3px;
  background: #50575d;
  color: #929a9e;
  font-family: ${narrow};
  font-size: 14px;
  line-height: 20px;
  text-align: right;
`;

const ChannelButton = styled.button`
  width: 82px;
  height: 25px;
  margin-left: 8px;
  border: 1px solid #363d43;
  border-radius: 2px;
  background: ${p => (p.$selected ? 'linear-gradient(#4f5d80, #47537a)' : 'linear-gradient(#525a61, #474f56)')};
  color: #c4ccd0;
  font-family: ${narrow};
  font-size: 11px;
`;

const Selector = styled.button`
  width: 7px;
  height: ${p => (p.$selected ? 25 : 20)}px;
  margin: 0 8px 0 8px;
  border: ${p => (p.$selected ? '2px solid #a6c83f' : '1px solid #2f363b')};
  background: ${p => (p.$selected ? '#3f5a2c' : '#474e54')};
`;

const Roll = styled.svg`
  flex: none;
  display: block;
`;

const StepRow = styled.div`
  display: flex;
  gap: 3px;
  padding: 2px 0 0 1px;
`;

const Step = styled.button`
  width: 12px;
  height: 19px;
  border: 1px solid ${p => (p.$red ? '#533c3e' : '#3f474c')};
  border-bottom: 2px solid #373d42;
  border-radius: 3px;
  background:
    linear-gradient(#33292c, #33292c) 2px 3px / 6px 1px no-repeat,
    ${p => (p.$red ? 'linear-gradient(#786364, #624e50)' : 'linear-gradient(#666e74, #525a60)')};
  &[aria-pressed='true'] { filter: brightness(1.5); }
`;

const RackFoot = styled.div`
  display: flex;
  height: 26px;
`;

const AddChannel = styled.button`
  width: 82px;
  margin-left: 97px;
  font-size: 18px;
  line-height: 24px;
  color: #bcc5c9;
`;

const FootBars = styled.div`
  flex: 1;
  display: flex;
  flex-direction: column;
  gap: 8px;
  padding: 0 10px 0 11px;
`;

const FootTrack = styled.div`
  height: 6px;
  margin: 0 11px;
  padding-left: 301px;
  background: #2f363c;
`;

const FootThumb = styled.div`
  width: 14px;
  height: 6px;
  background: #5b636a;
`;

const FootScroll = styled.div`
  display: flex;
  align-items: center;
  justify-content: space-between;
  color: #22292e;
`;

const FootHandle = styled.div`
  width: 20px;
  height: 2px;
  margin: 0 auto 0 3px;
  background: #22292e;
`;

const Pointer = styled.svg`
  position: absolute;
  left: 207px;
  top: 69px;
`;

/* taskbar */

const Tasks = styled.footer`
  position: relative;
  flex: none;
  display: flex;
  align-items: center;
  height: 34px;
  padding-left: 8px;
  background:
    linear-gradient(#7d86b8 0, transparent 2px),
    linear-gradient(90deg, #2c3c8c 0, #1c2a86 90px, #2a3192 140px, #5a60a8 165px, #6d73b2 190px, #4a529e 230px, #7577b4 262px, #2a2f86 290px, #31388f 470px, #12247a 540px, #3c3d95 600px, #14207c 680px, #232d84 760px, #3d4490 830px, #141f6a 900px, #1a2470 1000px);
`;

const Start = styled.button`
  width: 47px;
  height: 34px;
  text-align: left;
`;

const Pinned = styled.button`
  display: flex;
  justify-content: center;
  width: 58px;
`;

const Running = styled.button`
  display: flex;
  align-items: center;
  justify-content: center;
  width: 54px;
  height: 34px;
  margin-left: 3px;
  border: 1px solid #b7bedb;
  background: ${p => (p.$bright ? 'linear-gradient(135deg, #dfe3ee, #a5acca)' : 'linear-gradient(135deg, #a0a7c6, #5a6398)')};
`;

const Tray = styled.div`
  display: flex;
  gap: 7px;
  margin-left: auto;
  padding-right: 289px;
`;

const Recorder = styled.div`
  position: absolute;
  right: 0;
  bottom: -1px;
  display: flex;
  height: 37px;
  background: #6d6f70;
`;

const StopBlock = styled.button`
  width: 34px;
  display: flex;
  align-items: center;
  justify-content: center;
  i { width: 20px; height: 20px; background: #c5300f; border: 1px solid #e3b5a6; }
`;

const RecCol = styled.div`
  display: grid;
  grid-template-rows: 1fr 1fr;
`;

const RecCell = styled.button`
  width: 18px;
  display: flex;
  align-items: center;
  justify-content: center;
  border: 1px solid #7e8182;
  background: ${p => (p.$lit ? '#d5d7d7' : '#a5a8a8')};
  color: ${p => p.$color || '#24282a'};
`;

const Clock = styled.div`
  width: 69px;
  background: #000;
  color: #6fb587;
  font: italic 18px/37px "DejaVu Sans Mono", monospace;
  text-align: center;
`;

const LevelRow = styled.div`
  display: flex;
  align-items: center;
  gap: 8px;
  width: 69px;
  padding-left: 2px;
  background: ${p => (p.$lit ? '#c9cccd' : '#8e9192')};
  color: #52707f;
`;

const RecGrid = styled.div`
  display: grid;
  grid-template-columns: repeat(5, 18px);
  grid-template-rows: 1fr 1fr;
`;
